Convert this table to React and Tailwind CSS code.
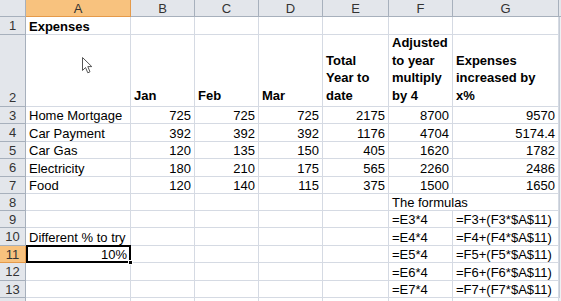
import React from "react";

const COLS = ["A", "B", "C", "D", "E", "F", "G"];

const data = {
  1: { A: { t: "Expenses", b: true } },
  2: {
    B: { t: ["Jan"], b: true },
    C: { t: ["Feb"], b: true },
    D: { t: ["Mar"], b: true },
    E: { t: ["Total", "Year to", "date"], b: true },
    F: { t: ["Adjusted", "to year", "multiply", "by 4"], b: true },
    G: { t: ["Expenses", "increased by", "x%"], b: true },
  },
  3: { A: { t: "Home Mortgage" }, B: { t: "725", r: true }, C: { t: "725", r: true }, D: { t: "725", r: true }, E: { t: "2175", r: true }, F: { t: "8700", r: true }, G: { t: "9570", r: true } },
  4: { A: { t: "Car Payment" }, B: { t: "392", r: true }, C: { t: "392", r: true }, D: { t: "392", r: true }, E: { t: "1176", r: true }, F: { t: "4704", r: true }, G: { t: "5174.4", r: true } },
  5: { A: { t: "Car Gas" }, B: { t: "120", r: true }, C: { t: "135", r: true }, D: { t: "150", r: true }, E: { t: "405", r: true }, F: { t: "1620", r: true }, G: { t: "1782", r: true } },
  6: { A: { t: "Electricity" }, B: { t: "180", r: true }, C: { t: "210", r: true }, D: { t: "175", r: true }, E: { t: "565", r: true }, F: { t: "2260", r: true }, G: { t: "2486", r: true } },
  7: { A: { t: "Food" }, B: { t: "120", r: true }, C: { t: "140", r: true }, D: { t: "115", r: true }, E: { t: "375", r: true }, F: { t: "1500", r: true }, G: { t: "1650", r: true } },
  8: { F: { t: "The formulas", overflow: true } },
  9: { F: { t: "=E3*4" }, G: { t: "=F3+(F3*$A$11)" } },
  10: { A: { t: "Different % to try" }, F: { t: "=E4*4" }, G: { t: "=F4+(F4*$A$11)" } },
  11: { A: { t: "10%", r: true, sel: true }, F: { t: "=E5*4" }, G: { t: "=F5+(F5*$A$11)" } },
  12: { F: { t: "=E6*4" }, G: { t: "=F6+(F6*$A$11)" } },
  13: { F: { t: "=E7*4" }, G: { t: "=F7+(F7*$A$11)" } },
};

function Cursor() {
  return (
    <svg
      className="absolute left-[81px] top-[56px]"
      width="13"
      height="19"
      viewBox="0 0 13 19"
    >
      <path
        d="M1.5 1.5 L1.5 14.5 L4.5 11.5 L6.8 16.8 L9 15.8 L6.8 10.6 L10.8 10.6 Z"
        fill="#ffffff"
        stroke="#555555"
        strokeWidth="1"
        strokeLinejoin="round"
      />
    </svg>
  );
}

function DataCell({ row, col }) {
  const c = data[row] && data[row][col];
  if (!c) {
    return <div className="border-r border-b border-[#d5dae3] bg-white" />;
  }
  if (Array.isArray(c.t)) {
    return (
      <div className="border-r border-b border-[#d5dae3] bg-white flex flex-col justify-end px-[3px] pb-[2px] text-[13px] leading-[17.5px] font-bold text-black whitespace-nowrap">
        {c.t.map((l, i) => (
          <div key={i}>{l}</div>
        ))}
      </div>
    );
  }
  if (c.overflow) {
    return (
      <div className="border-b border-[#d5dae3] bg-white flex items-center px-[3px] pt-[1px] text-[13px] leading-[15px] text-black whitespace-nowrap overflow-visible relative z-10">
        {c.t}
      </div>
    );
  }
  if (c.sel) {
    return (
      <div className="relative border-r border-b border-[#d5dae3] bg-white flex items-center justify-end px-[3px] pt-[1px] text-[13px] leading-[15px] text-black whitespace-nowrap">
        {c.t}
        <div className="absolute left-0 top-[-1px] right-[-1px] bottom-[-1px] border-2 border-black" />
        <div className="absolute right-[-3px] bottom-[-3px] w-[5px] h-[5px] bg-black border border-white" />
      </div>
    );
  }
  return (
    <div
      className={
        c.r
          ? "border-r border-b border-[#d5dae3] bg-white flex items-center justify-end px-[3px] pt-[1px] text-[13px] leading-[15px] text-black whitespace-nowrap"
          : c.b
          ? "border-r border-b border-[#d5dae3] bg-white flex items-center px-[3px] pt-[1px] text-[13px] leading-[15px] font-bold text-black whitespace-nowrap"
          : "border-r border-b border-[#d5dae3] bg-white flex items-center px-[3px] pt-[1px] text-[13px] leading-[15px] text-black whitespace-nowrap"
      }
    >
      {c.t}
    </div>
  );
}

export default function App() {
  const rows = [1, 2, 3, 4, 5, 6, 7, 8, 9, 10, 11, 12, 13];
  return (
    <div
      className="relative w-[561px] h-[301px] overflow-hidden bg-white"
      style={{ fontFamily: '"Liberation Sans", Arial, sans-serif' }}
    >
      <div className="grid grid-cols-[26px_105px_64px_64px_64px_66px_64px_106px_2px] grid-rows-[17px_18px_72px_17px_18px_17px_18px_17px_17px_17px_18px_17px_18px_17px_3px]">
        {/* header row */}
        <div className="bg-[#e3e6eb] border-r border-b border-[#a7b0bc]" />
        {COLS.map((c) => (
          <div
            key={c}
            className={
              c === "A"
                ? "bg-[#f8c27e] border-r border-b border-[#e59a4a] flex items-center justify-center text-[13px] leading-[15px] text-[#333]"
                : "bg-[#e3e6eb] border-r border-b border-[#a7b0bc] flex items-center justify-center text-[13px] leading-[15px] text-[#333]"
            }
          >
            {c}
          </div>
        ))}
        <div className="bg-[#e3e6eb] border-b border-[#a7b0bc]" />

        {rows.map((r) => (
          <React.Fragment key={r}>
            <div
              className={
                r === 11
                  ? "bg-[#f8c27e] border-r border-b border-[#e59a4a] flex items-center justify-center text-[13px] leading-[15px] text-[#333]"
                  : r === 2
                  ? "bg-[#e3e6eb] border-r border-b border-[#a7b0bc] flex items-end justify-center pb-[1px] text-[13px] leading-[15px] text-[#333]"
                  : "bg-[#e3e6eb] border-r border-b border-[#a7b0bc] flex items-center justify-center text-[13px] leading-[15px] text-[#333]"
              }
            >
              {r}
            </div>
            {COLS.map((c) => (
              <DataCell key={c} row={r} col={c} />
            ))}
            <div className="bg-[#eef0f3] border-l border-[#c5ccd6]" />
          </React.Fragment>
        ))}

        {/* partial row 14 */}
        <div className="bg-[#e3e6eb] border-r border-[#a7b0bc]" />
        {COLS.map((c) => (
          <div key={c} className="border-r border-[#d5dae3] bg-white" />
        ))}
        <div className="bg-[#eef0f3]" />
      </div>
      <Cursor />
    </div>
  );
}
